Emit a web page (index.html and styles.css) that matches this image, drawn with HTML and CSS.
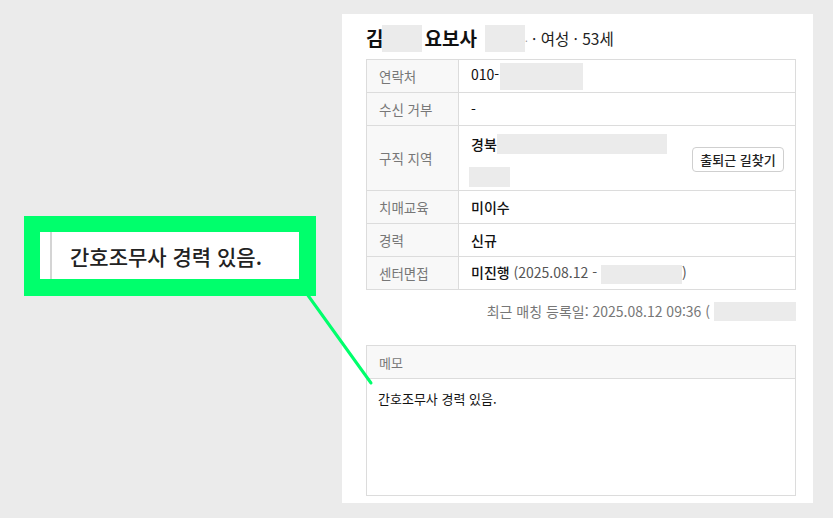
FILE: index.html
```html
<!DOCTYPE html>
<html lang="ko">
<head>
<meta charset="utf-8">
<link rel="stylesheet" href="styles.css">
</head>
<body>
<div class="page">
  <div class="panel">
    <div class="title">
      <span class="name">김</span><span class="mask mask-name"></span><span class="name">요보사</span>
      <span class="mask mask-name2"></span><span class="meta"><span class="stray">·</span> · 여성 · 53세</span>
    </div>
    <table class="info">
      <tr><th>연락처</th><td class="plain">010-<span class="mask mask-phone"></span></td></tr>
      <tr><th>수신 거부</th><td class="plain">-</td></tr>
      <tr class="tall"><th>구직 지역</th>
        <td>
          <div class="region">
            <div class="region-lines">
              <div class="rline">경북<span class="mask mask-region"></span></div>
              <div class="rline"><span class="mask mask-region2"></span></div>
            </div>
            <button class="route">출퇴근 길찾기</button>
          </div>
        </td>
      </tr>
      <tr><th>치매교육</th><td class="strong">미이수</td></tr>
      <tr><th>경력</th><td class="strong">신규</td></tr>
      <tr><th>센터면접</th><td><span class="strong">미진행</span> <span class="sub">(2025.08.12 - <span class="mask mask-date"></span>)</span></td></tr>
    </table>
    <div class="updated"><span>최근 매칭 등록일: 2025.08.12 09:36 (</span><span class="mask mask-upd"></span></div>
    <div class="memo">
      <div class="memo-head">메모</div>
      <div class="memo-body">간호조무사 경력 있음.</div>
    </div>
  </div>
</div>
<div class="callout">
  <div class="callout-inner"><span>간호조무사 경력 있음.</span></div>
</div>
<svg class="pointer" width="833" height="518" viewBox="0 0 833 518">
  <line x1="307" y1="294" x2="371" y2="383" stroke="#00ff6c" stroke-width="3" stroke-linecap="round"/>
</svg>
</body>
</html>
```
FILE: styles.css
```css
* { box-sizing: border-box; }
html, body { margin: 0; padding: 0; }
body {
  width: 833px;
  height: 518px;
  overflow: hidden;
  background: #ebebeb;
  font-family: "Noto Sans CJK KR", "Noto Sans", sans-serif;
  color: #111;
  position: relative;
}
.page {
  display: flex;
  justify-content: flex-end;
  padding: 14px 20px 0 0;
}
.panel {
  width: 471px;
  height: 489px;
  background: #fff;
  padding: 10px 17px 0 24px;
}
.title {
  display: flex;
  align-items: center;
  height: 28px;
  margin-bottom: 7px;
}
.name {
  font-size: 19px;
  font-weight: 700;
  color: #111;
  line-height: 28px;
}
.mask {
  display: inline-block;
  background: #ebebeb;
  vertical-align: middle;
}
.mask-name { width: 40px; height: 27px; margin: 0 2px 0 -1px; }
.mask-name2 { width: 40px; height: 27px; margin-left: 8px; }
.meta {
  font-size: 15.5px;
  color: #222;
  margin-left: 0;
}
.stray { color: #999; font-size: 10px; }
.info {
  width: 430px;
  border-collapse: collapse;
  font-size: 14px;
}
.info th, .info td {
  border: 1px solid #dcdcdc;
  height: 33px;
  padding: 0 11px 0 12px;
  text-align: left;
  vertical-align: middle;
}
.info th {
  width: 92px;
  background: #f8f8f8;
  color: #777;
  font-size: 13.5px;
  font-weight: 400;
}
.info td { color: #111; }
.info tr.tall th, .info tr.tall td { height: 65px; }
.mask-phone { width: 83px; height: 27px; margin-left: 1px; }
.region {
  display: flex;
  align-items: center;
  justify-content: space-between;
}
.region-lines { display: flex; flex-direction: column; gap: 13px; margin-top: 5px; }
.rline { display: flex; align-items: center; height: 20px; font-weight: 500; }
.mask-region { width: 170px; height: 20px; margin-left: 0; }
.mask-region2 { width: 41px; height: 20px; margin-left: -2px; }
.route {
  font-family: inherit;
  font-size: 13px;
  font-weight: 500;
  color: #222;
  background: #fff;
  border: 1px solid #cfcfcf;
  border-radius: 4px;
  height: 25px;
  width: 92px;
  padding: 0;
  margin-top: 2px;
}
.strong { font-weight: 500; color: #111; }
.sub { color: #555; }
.mask-date { width: 81px; height: 19px; }
.updated {
  display: flex;
  justify-content: flex-end;
  align-items: center;
  margin-top: 11px;
  font-size: 14px;
  color: #777;
}
.mask-upd { width: 82px; height: 19px; margin-left: 4px; }
.memo {
  margin-top: 24px;
  border: 1px solid #dcdcdc;
  height: 151px;
}
.memo-head {
  height: 33px;
  background: #f8f8f8;
  border-bottom: 1px solid #dcdcdc;
  display: flex;
  align-items: center;
  padding-left: 12px;
  font-size: 13px;
  color: #777;
}
.memo-body {
  padding: 10px 11px;
  font-size: 13px;
  color: #111;
}
.callout {
  position: absolute;
  left: 24px;
  top: 216px;
  width: 292px;
  height: 80px;
  border: 16px solid #00ff6c;
  border-right-width: 17px;
  border-bottom-width: 17px;
  background: #fff;
  padding-left: 10px;
}
.callout-inner {
  height: 100%;
  border-left: 2px solid #d4d4d4;
  display: flex;
  align-items: center;
  padding-left: 18px;
  font-size: 21px;
  font-weight: 500;
  color: #222;
}
.pointer {
  position: absolute;
  left: 0;
  top: 0;
  pointer-events: none;
}
```
